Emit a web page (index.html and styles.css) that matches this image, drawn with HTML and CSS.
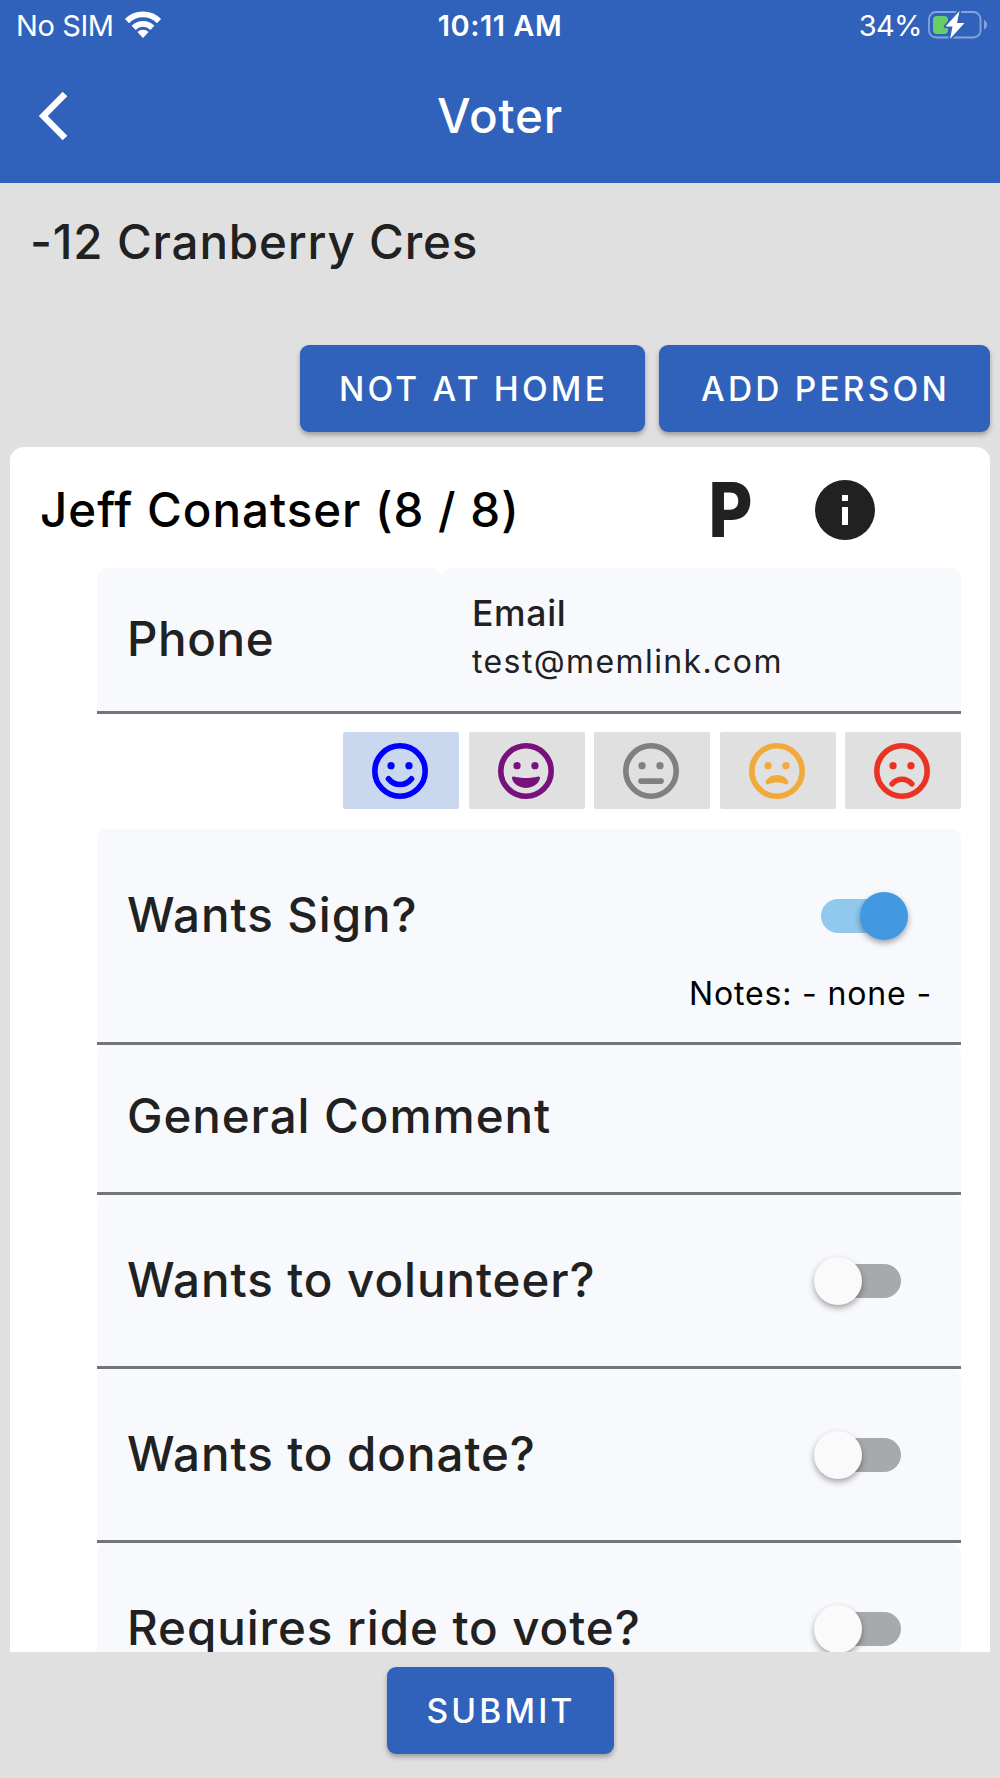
FILE: index.html
```html
<!DOCTYPE html>
<html lang="en">
<head>
  <meta charset="UTF-8">
  <meta name="viewport" content="width=device-width, initial-scale=1.0">
  <title>Voter</title>
  <link rel="stylesheet" href="styles.css">
</head>
<body>
  <div class="app">
    <header class="header">
      <div class="status">
        <div class="carrier">
          <span>No SIM</span>
          <svg class="wifi" width="40" height="30" viewBox="0 0 40 30">
            <g fill="none" stroke="#fff" stroke-width="5.8">
              <path d="M4 12.1a22.6 22.6 0 0 1 32 0"/>
              <path d="M10.6 18.9a13.2 13.2 0 0 1 18.8 0"/>
            </g>
            <path d="M20 29l-5.6-6a8 8 0 0 1 11.2 0z" fill="#fff"/>
          </svg>
        </div>
        <span class="time">10:11 AM</span>
        <div class="power">
          <span class="percent">34%</span>
          <svg class="battery" width="60" height="30" viewBox="0 0 60 30">
            <rect x="1" y="2" width="51.5" height="25.5" rx="7" fill="none" stroke="#86a4d8" stroke-width="1.8"/>
            <path d="M56 10c4 1.5 4 8 0 9.5z" fill="#86a4d8"/>
            <rect x="5" y="6" width="15" height="18" rx="4" fill="#67ce67"/>
            <path d="M31.5 1L17.5 16.5H24.5L22 29L36.5 13H29z" fill="#fff" stroke="#3062bb" stroke-width="3.5" paint-order="stroke" stroke-linejoin="round"/>
          </svg>
        </div>
      </div>
      <div class="toolbar">
        <svg class="back" width="36" height="52" viewBox="0 0 36 52">
          <path d="M29 4L7.3 26L29 48" fill="none" stroke="#fff" stroke-width="6.4"/>
        </svg>
        <h1>Voter</h1>
      </div>
    </header>

    <main class="content">
      <h2 class="address">-12 Cranberry Cres</h2>
      <div class="actions">
        <button class="btn not-home">NOT AT HOME</button>
        <button class="btn add-person">ADD PERSON</button>
      </div>

      <section class="card">
        <div class="card-head">
          <h3>Jeff Conatser (8 / 8)</h3>
          <span class="parking">P</span>
          <svg class="info" width="60" height="60" viewBox="2 2 20 20">
            <circle cx="12" cy="12" r="10" fill="#212121"/>
            <path d="M11 7h2v2h-2zM11 11h2v6h-2z" fill="#fff"/>
          </svg>
        </div>

        <div class="fields">
          <div class="contact">
            <div class="field phone"><span class="label">Phone</span></div>
            <div class="field email">
              <span class="sub-label">Email</span>
              <span class="value">test@memlink.com</span>
            </div>
          </div>

          <div class="moods">
            <button class="mood active">
              <svg viewBox="2 2 20 20" color="#0000ff">
                <circle class="ring" cx="12" cy="12" r="9"/>
                <circle cx="8.8" cy="10.1" r="1.3"/><circle cx="15.2" cy="10.1" r="1.3"/>
                <path class="line" d="M7.9 14.8C10.2 17.5 13.8 17.5 16.1 14.8"/>
              </svg>
            </button>
            <button class="mood">
              <svg viewBox="2 2 20 20" color="#79117c">
                <circle class="ring" cx="12" cy="12" r="9"/>
                <circle cx="8.8" cy="10.1" r="1.3"/><circle cx="15.2" cy="10.1" r="1.3"/>
                <path d="M7.7 14C10.5 14.7 13.5 14.7 16.3 14C16.8 13.9 17.1 14.2 17 14.7C15.6 19.2 8.4 19.2 7 14.7C6.9 14.2 7.2 13.9 7.7 14z"/>
              </svg>
            </button>
            <button class="mood">
              <svg viewBox="2 2 20 20" color="#808080">
                <circle class="ring" cx="12" cy="12" r="9"/>
                <circle cx="8.8" cy="10.1" r="1.3"/><circle cx="15.2" cy="10.1" r="1.3"/>
                <path class="line" d="M8.4 15.6H15.6"/>
              </svg>
            </button>
            <button class="mood">
              <svg viewBox="2 2 20 20" color="#f2a93b">
                <circle class="ring" cx="12" cy="12" r="9"/>
                <circle cx="8.8" cy="10.1" r="1.3"/><circle cx="15.2" cy="10.1" r="1.3"/>
                <path d="M12 13.4C14 13.4 16 14.7 16 16.1C16 16.6 15.7 16.8 15.2 16.7C13 15.9 11 15.9 8.8 16.7C8.3 16.8 8 16.6 8 16.1C8 14.7 10 13.4 12 13.4z"/>
              </svg>
            </button>
            <button class="mood">
              <svg viewBox="2 2 20 20" color="#ea3323">
                <circle class="ring" cx="12" cy="12" r="9"/>
                <circle cx="8.8" cy="10.1" r="1.3"/><circle cx="15.2" cy="10.1" r="1.3"/>
                <path class="line" d="M8.5 16.6C10.5 14.4 13.5 14.4 15.5 16.6"/>
              </svg>
            </button>
          </div>

          <div class="field sign">
            <div class="row">
              <span class="label">Wants Sign?</span>
              <span class="toggle on"></span>
            </div>
            <p class="notes">Notes: - none -</p>
          </div>
          <div class="field comment"><span class="label">General Comment</span></div>
          <div class="field option">
            <span class="label">Wants to volunteer?</span>
            <span class="toggle"></span>
          </div>
          <div class="field option">
            <span class="label">Wants to donate?</span>
            <span class="toggle"></span>
          </div>
          <div class="field option">
            <span class="label">Requires ride to vote?</span>
            <span class="toggle"></span>
          </div>
        </div>
      </section>
    </main>

    <footer class="footer">
      <button class="btn submit">SUBMIT</button>
    </footer>
  </div>
</body>
</html>
```
FILE: styles.css
```css
* {
  box-sizing: border-box;
}
body {
  margin: 0;
  background-color: #e0e0e0;
  color: #212121;
  font-family: Inter, "Liberation Sans", sans-serif;
}
h1, h2, h3, p {
  margin: 0;
  font-weight: 500;
}
button {
  border: 0;
  padding: 0;
  font-family: inherit;
}
svg {
  display: block;
  flex: none;
}
.app {
  display: flex;
  flex-direction: column;
  height: 1778px;
  overflow: hidden;
}

/* header */
.header {
  flex: none;
  height: 183px;
  background-color: #3062bb;
  color: #fff;
}
.status {
  display: grid;
  grid-template-columns: 1fr auto 1fr;
  height: 51px;
  padding: 0 12px 0 16px;
  font-size: 29px;
  line-height: 51px;
  letter-spacing: -0.4px;
}
.carrier, .power {
  display: flex;
}
.power {
  justify-content: flex-end;
}
.wifi {
  margin: 9px 0 0 9px;
}
.battery {
  margin: 10px 0 0 6px;
}
.time {
  margin-right: 4px;
  font-weight: 600;
  letter-spacing: 0.5px;
}
.percent {
  letter-spacing: -0.6px;
}
.toolbar {
  display: grid;
  grid-template-columns: 1fr auto 1fr;
  align-items: center;
  height: 130px;
  padding: 0 36px;
}
h1 {
  margin-top: -2px;
  font-size: 47.5px;
  letter-spacing: 0.8px;
}

/* page body */
.content {
  flex: 1;
  min-height: 0;
  padding: 0 10px;
  overflow: hidden;
}
.address {
  height: 162px;
  padding-left: 20px;
  font-size: 47.5px;
  line-height: 117px;
  letter-spacing: 0.83px;
}
.actions {
  display: flex;
  justify-content: flex-end;
  gap: 14px;
  margin-bottom: 15px;
}
.btn {
  height: 87px;
  border-radius: 9px;
  background-color: #3062bb;
  color: #fff;
  font-size: 33.5px;
  font-weight: 500;
  letter-spacing: 3.2px;
  box-shadow: 0 3px 5px rgba(0, 0, 0, 0.3);
}
.not-home {
  width: 345px;
  padding-left: 2px;
}
.add-person {
  width: 331px;
  padding-left: 2px;
}
.submit {
  width: 227px;
  padding-left: 2px;
}

/* voter card */
.card {
  border-radius: 14px 14px 0 0;
  background-color: #fff;
}
.card-head {
  display: flex;
  align-items: center;
  height: 121px;
  padding: 4px 115px 0 30px;
}
h3 {
  flex: 1;
  color: #000;
  font-size: 47.5px;
  letter-spacing: 0.98px;
}
.parking {
  width: 107px;
  font-size: 75px;
  font-weight: 800;
  line-height: 72px;
  transform: scaleX(0.9);
  transform-origin: 5px 0;
}
.fields {
  padding: 0 29px 0 87px;
}
.contact {
  display: grid;
  grid-template-columns: 345px 1fr;
}
.field {
  padding: 0 30px;
  border-bottom: 3px solid #747577;
  border-radius: 9px 9px 0 0;
  background-color: #f8f9fd;
}
.contact .field {
  display: flex;
  flex-direction: column;
  justify-content: center;
  height: 146px;
  padding-bottom: 3px;
}
.label {
  font-size: 47.5px;
  font-weight: 500;
  letter-spacing: 0.93px;
  white-space: nowrap;
}
.phone .label {
  letter-spacing: 0.6px;
}
.sub-label {
  font-size: 35.5px;
  font-weight: 500;
  line-height: 48px;
  letter-spacing: 0.7px;
}
.value {
  font-size: 32px;
  line-height: 48px;
  letter-spacing: 1.4px;
}
.moods {
  display: grid;
  grid-template-columns: repeat(5, 116px);
  justify-content: flex-end;
  gap: 9.5px;
  padding: 18px 0 20px;
}
.mood {
  display: grid;
  place-items: center;
  height: 77px;
  padding-right: 2px;
  border-radius: 2px;
  background-color: #e0e0e0;
}
.mood.active {
  background-color: #c9d8ee;
}
.mood svg {
  width: 56px;
  height: 56px;
  fill: currentColor;
}
.ring, .line {
  fill: none;
  stroke: currentColor;
  stroke-width: 2;
  stroke-linecap: round;
}
.sign {
  height: 216px;
}
.row, .option {
  display: flex;
  align-items: center;
  justify-content: space-between;
}
.row {
  height: 173px;
  padding-right: 23px;
}
.notes {
  margin: -28px -1px 0 0;
  color: #000;
  font-size: 32px;
  font-weight: 400;
  line-height: 40px;
  letter-spacing: 0.85px;
  text-align: right;
}
.comment {
  height: 150px;
  line-height: 141px;
}
.option {
  height: 174px;
  padding-right: 46px;
}
.row .label, .option .label {
  margin-bottom: 2px;
}

/* switch, knob hangs over the track */
.toggle {
  position: relative;
  width: 101px;
  height: 48px;
}
.toggle::before {
  content: "";
  position: absolute;
  top: 7px;
  left: 14px;
  width: 73px;
  height: 34px;
  border-radius: 17px;
  background-color: #a8a9ab;
}
.toggle::after {
  content: "";
  position: absolute;
  left: 0;
  width: 48px;
  height: 48px;
  border-radius: 50%;
  background-color: #fafafa;
  box-shadow: 0 3px 6px rgba(0, 0, 0, 0.35);
}
.toggle.on::before {
  background-color: #90c8ee;
}
.toggle.on::after {
  left: 53px;
  background-color: #4299e1;
}

.footer {
  flex: none;
  height: 126px;
  padding-top: 15px;
  text-align: center;
}
```
